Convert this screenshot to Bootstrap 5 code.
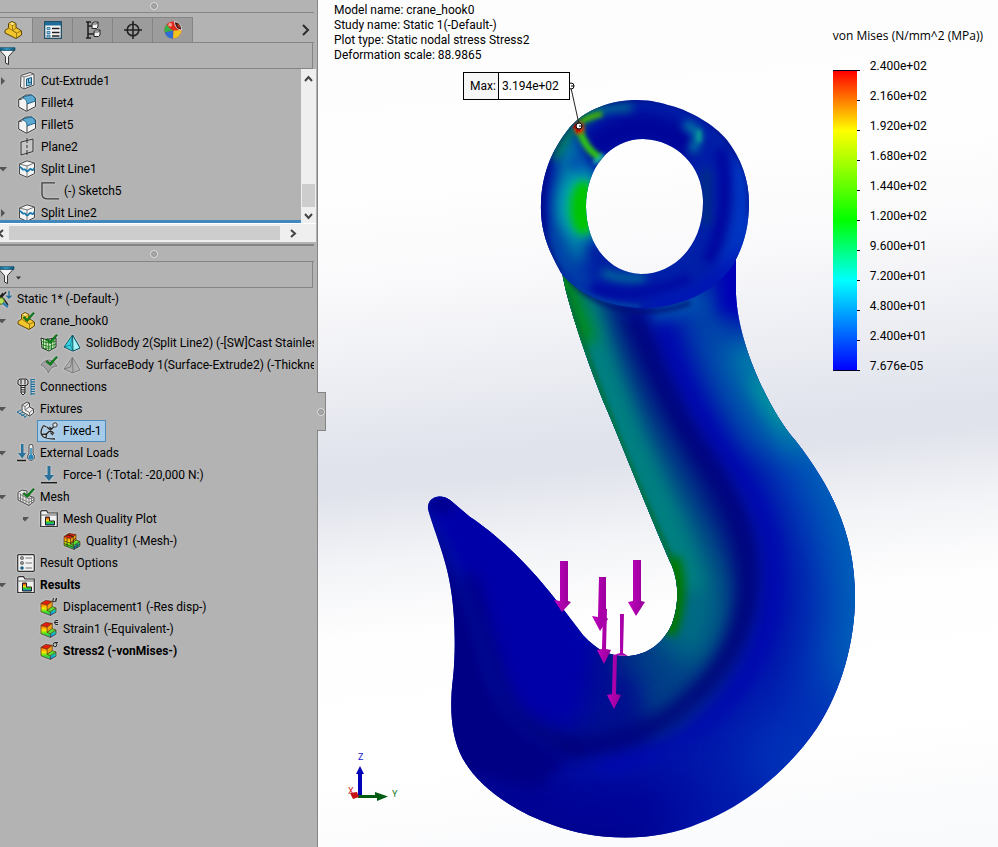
<!DOCTYPE html>
<html lang="en">
<head>
<meta charset="utf-8">
<meta name="viewport" content="width=device-width, initial-scale=1">
<title>crane_hook0 - Static 1 stress plot</title>
<link rel="stylesheet" href="https://cdn.jsdelivr.net/npm/bootstrap@5.3.0/dist/css/bootstrap.min.css">
<style>
  body { font-family: Roboto, "Open Sans", sans-serif; font-size: 12px; line-height: 15px; color: #000; }
  svg { display: block; flex: none; }
  button { color: inherit; }
  .bare { background: none; border: 0; padding: 0; }

  .side { width: 318px; background: #b3b3b3; border-right: 1px solid #858585; }
  .grip { height: 13px; border-bottom: 1px solid #858585; margin-right: 3px; }
  .grip-low { height: 18px; border-top: 2px solid #858585; margin-top: 2px; }
  .grip i, .flyout i { width: 8px; height: 8px; border: 1px solid #dedede; border-radius: 50%; background: #a8a8a8; box-shadow: inset 0 0 0 1px #909090; }
  .grip i { margin-left: -6px; }

  .tabstrip { height: 30px; padding-top: 4px; border-bottom: 1px solid #858585; margin-right: 3px; }
  .tabstrip .tab { width: 40px; background: #9c9c9c; border: 1px solid #858585; border-width: 1px 1px 0 0; padding: 0; }
  .tabstrip .tab.current { width: 33px; padding-left: 4px; background: #b3b3b3; }
  .find { height: 26px; border: 1px solid #858585; border-width: 0 1px 1px 0; margin-right: 4px; }
  .find input { background: none; border: 0; outline: 0; min-width: 0; height: 22px; font-size: 12px; }

  .tree { list-style: none; margin: 0; padding: 0; min-width: 0; white-space: nowrap; overflow: hidden; }
  .tree li { height: 22px; display: flex; align-items: center; }
  .tree .twist { width: 17px; height: 22px; flex: none; display: flex; align-items: center; }
  .tree .ic { width: 18px; height: 18px; margin-right: 5px; filter: drop-shadow(0 0 1px #dcdcdc); overflow: visible; }
  .tree .l0 { margin-left: -6px; }
  .tree .l2 { padding-left: 23px; }
  .tree .l3 { padding-left: 46px; }
  .tree .picked { display: flex; align-items: center; height: 22px; margin-left: -3px; padding: 0 3px 0 2px; background: #a6cbe8; border: 1px solid #4c8cba; }
  .history { height: 154px; }
  .history .tree { padding: 1px 0 0 1px; height: 154px; border-bottom: 3px solid #4189bd; }
  .history .twist svg { margin-left: -2px; }
  .results { margin-right: 3px; }

  .vbar { width: 15px; background: #efefef; margin-right: 1px; height: 156px; }
  .vbar button { height: 18px; }
  .vbar div { height: 23px; background: #cdcdcd; margin: 0 1px; }
  .hbar { height: 19px; background: #efefef; margin-right: 1px; padding: 2px 0; border-top: 1px solid #fff; }
  .hbar div { width: 271px; background: #cdcdcd; }
  .hbar .left { width: 9px; }
  .hbar .right { width: 26px; }

  .flyout { left: 100%; top: 392px; width: 9px; height: 39px; background: #b3b3b3; border: 1px solid #858585; border-left: 0; z-index: 2; }

  .stage { min-width: 0; background: linear-gradient(174deg, #fdfdfe 0%, #fefefe 22%, #f9f9fb 32%, #eeeff4 41%, #e0e3ec 51%, #e1e3ec 54%, #f3f4f7 62%, #fefefe 70%, #fff 85%, #f8f9fb 100%); }
  .scene { left: 0; top: 0; width: 680px; height: 847px; }
  .facts { padding: 3px 0 0 16px; }
  .legend { padding: 28px 15px 0 0; }
  .legend h2 { font: 12px/15px "Open Sans", sans-serif; margin: 0; }
  .legend ol { list-style: none; margin: 8px 0 0 10px; padding: 0; }
  .legend li { height: 30px; line-height: 30px; }
  .ramp { width: 24px; height: 301px; margin-top: 27px; border: 1px solid #002; border-width: 1px 0; background: linear-gradient(#f00 0%, #ff8000 10%, #ff0 20%, #80ff00 35%, #0f0 50%, #00ff80 60%, #0ff 70%, #0080ff 85%, #00f 100%); }
  .ticks { width: 3px; height: 301px; margin-top: 27px; }
  .ticks b { height: 1px; background: #002; }
  .callout { left: 145px; top: 72px; width: 107px; height: 28px; border: 1px solid #000; background: #fff; }
  .callout dt { width: 35px; border-right: 1px solid #000; background: #f6f6f6; font-weight: 400; padding-left: 6px; line-height: 26px; }
  .callout dd { margin: 0; padding-left: 3px; line-height: 26px; }
</style>
<script src="https://cdn.jsdelivr.net/npm/bootstrap@5.3.0/dist/js/bootstrap.bundle.min.js"></script>
</head>
<body class="m-0">

<svg width="0" height="0" class="position-absolute" aria-hidden="true">
  <defs>
    <linearGradient id="rain" x1="0" y1="0" x2="0" y2="1">
      <stop offset="0" stop-color="#e02010"/><stop offset=".25" stop-color="#f08010"/><stop offset=".42" stop-color="#f0e010"/><stop offset=".65" stop-color="#30c820"/><stop offset=".85" stop-color="#10b0a0"/><stop offset="1" stop-color="#1050d0"/>
    </linearGradient>
    <linearGradient id="face" x1="0" y1="0" x2="0" y2="1"><stop offset="0" stop-color="#ff5010"/><stop offset=".4" stop-color="#ffe800"/><stop offset=".7" stop-color="#40e020"/><stop offset="1" stop-color="#10b8c8"/></linearGradient>
    <linearGradient id="cold" x1="0" y1="0" x2="0" y2="1"><stop offset="0" stop-color="#30d830"/><stop offset=".5" stop-color="#10c0d0"/><stop offset="1" stop-color="#1058e8"/></linearGradient>
    <linearGradient id="fun" x1="0" x2="1"><stop offset="0" stop-color="#0e5578"/><stop offset=".5" stop-color="#39a0cc"/><stop offset="1" stop-color="#0e5578"/></linearGradient>
    <symbol id="i-part" viewBox="0 0 18 18"><path d="M1 9.500 4.500 7V2.500L8 .5l4 2v4l2.500 1.500 3 2v4L12 17.500 1 12z" fill="#f3c52c" stroke="#55430a"/><path d="m4.500 2.500 4 2v5l4 2.500v5M8.500 4.500 12 2.500M8.500 9.500 12 7M12.500 12l5-2M1 9.500l3.500-2.500 8 5" fill="none" stroke="#8a6c0c" stroke-width=".8"/><path d="m5 3 3-1.800L11 3 8.500 4z" fill="#ffe88a"/></symbol>
    <symbol id="i-cut" viewBox="0 0 18 18"><path d="m3 3.500 9-3 4 1.500v11l-10 4-3.500-2z" fill="#f4f4f4" stroke="#444"/><path d="M6 5v12M6 5l10-3M6 5 3 3.500" fill="none" stroke="#777"/><path d="m8.500 7 5-1.500v7l-5 1.500z" fill="#8cc6e2" stroke="#155a82"/><path d="M10.500 6.500V11l3-1" fill="none" stroke="#155a82"/></symbol>
    <symbol id="i-fillet" viewBox="0 0 18 18"><path d="M.7 5.500 8 1h5.500l4 3v8.500L8.500 17.300.7 13z" fill="#f4f4f4" stroke="#3a3a3a"/><path d="M6.500 2.500 13 1c2.500.5 4.500 2.500 4.500 6L9 10C9 7 8 5 4.500 4z" fill="#5ba9d0" stroke="#155a82" stroke-width=".9"/><path d="M9 10v7M.7 5.500l3.500-.5" stroke="#3a3a3a" fill="none"/></symbol>
    <symbol id="i-plane" viewBox="0 0 18 18"><path d="m3 4 12-3v12.500L3 17z" fill="#c6c6c6" stroke="#333"/><path d="M9 0v18" stroke="#333" stroke-dasharray="5 2 3 2"/></symbol>
    <symbol id="i-split" viewBox="0 0 18 18"><path d="M1.500 4 9 .8l7.500 2.200v10.500L9 17.300 1.500 14z" fill="#f4f4f4" stroke="#444"/><path d="m1.500 4 7.500 2 7.500-3M9 6v11" fill="none" stroke="#666" stroke-width=".9"/><path d="M1.500 7C3 6 4 10.500 6 9.500s2 3 4 1.500 2-3 3.500-1.500 2-.5 3-1.500" fill="none" stroke="#1f78aa" stroke-width="1.800"/></symbol>
    <symbol id="i-sketch" viewBox="0 0 18 18"><path d="M14 .8H1v11q0 5 5 5h12" fill="none" stroke="#3c3c3c" stroke-width="1.300"/></symbol>
    <symbol id="i-study" viewBox="0 0 18 18"><path d="m2 2 7 7M9 3l-6 8M12 2l-6 7M9 8l5 7" stroke="#222" stroke-width="1.500" fill="none"/><circle cx="7" cy="11" r="3.300" fill="#b9e05a" stroke="#4a6a18"/><path d="m9 13 5 4" stroke="#2b7fb0" stroke-width="2.400"/><path d="M15 1v7m-2.500-2.500L15 8l2.500-2.500" stroke="#1f6c98" stroke-width="1.400" fill="none"/></symbol>
    <symbol id="tick" viewBox="0 0 18 18"><path d="m7 4.500 3 2.500 6-6.500 1.500.8L10.500 9.500 6 6z" fill="#0a8a1a" stroke="#044d0c" stroke-width=".6"/></symbol>
    <symbol id="i-partok" viewBox="0 0 18 18"><use href="#i-part"/><use href="#tick"/></symbol>
    <symbol id="i-solid" viewBox="0 0 18 18"><path d="m1 4 5 1.500L16 4v9l-7 4-7-3z" fill="#d7f0c8" stroke="#222"/><path d="M3.500 5v9.500M6 5.500V16M8.700 5v12M11.500 5v11M14 5v9M1.300 7.500 9 9l7-2M1.500 10.500 9 12.500l7-2.500M4 14.500l5-.5 5 .5" fill="none" stroke="#1f7a24" stroke-width=".9"/><use href="#tick"/></symbol>
    <symbol id="i-tet" viewBox="0 0 18 18"><path d="M9.500 1 1 13l8.500 4L17 14z" fill="#38d4e4" stroke="#105a66"/><path d="M9.500 1 10 17 17 14z" fill="#a6f2f6" stroke="#105a66"/><path d="M9.500 1 7.500 11 1 13m6.500-2 2.500 6" fill="none" stroke="#105a66" stroke-width=".6"/></symbol>
    <symbol id="i-surf" viewBox="0 0 18 18"><path d="M1 9c3-5 8-6 12-4l4 5c-4 .5-7 2.500-8.500 7C7 13.500 4 10 1 9z" fill="#a2a2a2" stroke="#767676"/><use href="#tick"/></symbol>
    <symbol id="i-tetg" viewBox="0 0 18 18"><path d="M9.500 1 1 13l8.500 4L17 14z" fill="#b0b0b0" stroke="#7c7c7c"/><path d="M9.500 1 10 17M9.500 1 7.500 11 1 13" fill="none" stroke="#7c7c7c"/></symbol>
    <symbol id="i-conn" viewBox="0 0 18 18"><path d="M1 2.500 3 1h6l2 1.500V6L9 7.500H3L1 6z" fill="#d8d8d8" stroke="#222"/><path d="M4 7.500h4V15l-2 2-2-2z" fill="#eee" stroke="#222"/><path d="M4 9.500h4m-4 2.300h4M4 14h4M4 1.500v5M8 1.500v5" stroke="#222"/><path d="M14 .8v16.400" stroke="#1c6f9c"/><path d="M14 1.500h4m-4 2.400h4m-4 2.400h4m-4 2.400h4m-4 2.400h4m-4 2.400h4m-4 2.400h4" stroke="#1c6f9c" stroke-width="1.200"/></symbol>
    <symbol id="i-fixt" viewBox="0 0 18 18"><path d="m5 5 5-3 2.500 1v4l4 2v4l-4 3L5 11.500z" fill="#eee" stroke="#444"/><path d="m5 5 3 1.500V10l4.500 2.500V16M8 6.500l4-3.500m.5 9.500 4-3.500M8 10l4-3" fill="none" stroke="#666" stroke-width=".9"/><path d="m0 12 4-2M2 14l4-2M4 16l4-2M7 17.500l3-2M0 12l9 5" stroke="#246f9a" fill="none"/></symbol>
    <symbol id="i-fixed" viewBox="0 0 18 18"><path d="M3.500 3.500C.5 8 .5 11 2 13.500s7 3.500 13 3.500M1.500 12.500l5-.5-.5 4.500" fill="none" stroke="#2a2a2a" stroke-width="1.300"/><path d="M6 12.500 13.500 5M7 5l7 6.500M3.500 3.500l3 1.500M9.500 5 12 7.500m-1.500 3L13 13" stroke="#2a2a2a" stroke-width="1.300" fill="none"/><circle cx="15" cy="3" r="2.200" fill="#dce9f3" stroke="#2a2a2a"/></symbol>
    <symbol id="i-force" viewBox="0 0 18 18"><path d="M7.500 0h3v9H14l-5 6-5-6h3.500z" fill="#2a7299"/><path d="M1 16.700h16" stroke="#1c1c1c" stroke-width="1.500"/></symbol>
    <symbol id="i-loads" viewBox="0 0 18 18"><path d="M4 0h2.500v9H9l-3.800 5.500L1 9h3z" fill="#2a7299"/><path d="M0 16.500h9" stroke="#1c1c1c" stroke-width="1.500"/><path d="M12 2.200a2 2 0 0 1 4 0V10a3.500 3.500 0 1 1-4 0z" fill="#e6eef2" stroke="#444"/><circle cx="14" cy="13" r="2.600" fill="#2a86b8"/><path d="M14 4v9" stroke="#2a86b8" stroke-width="1.500"/></symbol>
    <symbol id="i-mesh" viewBox="0 0 18 18"><path d="M1 7V4.500L5 2l5 1v4l7 2.500v4L12 17.500 1 12z" fill="#e8e8e8" stroke="#444"/><path d="M3.500 5.500v7.500M6 5v9.500M9 5v10.500M12 9v8M14.500 9v7M1 9.500l11 5 5-3M2.500 6 12 11l5-1.500" fill="none" stroke="#6c6c6c" stroke-width=".8"/><use href="#tick"/></symbol>
    <symbol id="i-folder" viewBox="0 0 18 18"><path d="M.7 16.500V1.500L2 .7h4.500L8 3h9.300v13.500z" fill="#f2f2f2" stroke="#333" stroke-width="1.200"/><path d="M.7 5h16.600" stroke="#666"/><path d="M5.500 7h4v4h5v4h-9z" fill="url(#rain)" stroke="#222"/></symbol>
    <symbol id="i-cube" viewBox="0 0 18 18"><path d="M1 4.500 6 1.500l7 1-5.500 4z" fill="#e81c0c"/><path d="m1 4.500 6.500 2v5.500l3.500 1.500V17.500L1 13.500z" fill="url(#face)"/><path d="M7.500 6.500 13 2.500V8l-5.500 4z" fill="#f0a010"/><path d="M7.500 12 13 8l4 1.500-6 4z" fill="#58e030"/><path d="m11 13.500 6-4v4.500l-6 3.500z" fill="url(#cold)"/><path d="M1 4.500 6 1.500l7 1V8l4 1.500V14l-6 3.500-10-4zM1 4.500l6.500 2V12l3.500 1.500v4M7.500 6.500l5.500-4M7.500 12 13 8m-2 5.500 6-4" fill="none" stroke="#4a2408" stroke-width=".7"/></symbol>
    <symbol id="i-cubemesh" viewBox="0 0 18 18"><use href="#i-cube"/><path d="M4 5.500v9M10.300 4.500v9M1 9l6.500 2L13 6M3.500 3l7 1.500M14 11.500V16M5 2l5 3M1 11.500l10 4 6-3.500" stroke="#302008" stroke-width=".7" fill="none"/></symbol>
    <symbol id="i-opts" viewBox="0 0 18 18"><rect x=".7" y=".7" width="16.600" height="16.600" rx="1" fill="#f2f2f2" stroke="#333" stroke-width="1.200"/><circle cx="5" cy="4" r="1.600" fill="#999" stroke="#555" stroke-width=".7"/><circle cx="5" cy="9" r="1.600" fill="#999" stroke="#555" stroke-width=".7"/><circle cx="5" cy="14" r="1.800" fill="#1d5f8a"/><path d="M8.500 4H15M8.500 9H15m-6.500 5H15" stroke="#777" stroke-width="1.200"/></symbol>
    <symbol id="i-funnel" viewBox="0 0 18 18"><path d="m.5 3 6 6.500V16l3 1.500V9.500l6-6.500z" fill="#f4f4f4" stroke="#333"/><path d="M0 .7h16v2.600H0z" fill="url(#fun)" stroke="#0e4a68" stroke-width=".7"/></symbol>
    <symbol id="t-right" viewBox="0 0 8 8"><path d="M2 0v8l4-4z" fill="#555"/></symbol>
    <symbol id="t-down" viewBox="0 0 8 8"><path d="M0 2h8L4 6.500z" fill="#555"/></symbol>
  </defs>
</svg>

<div class="d-flex vh-100 overflow-hidden">
  <aside class="side position-relative flex-shrink-0 d-flex flex-column">
    <div class="grip d-flex justify-content-center align-items-center"><i></i></div>
    <div class="tabstrip d-flex">
      <button class="tab current d-flex align-items-center" type="button" aria-label="Feature tree"><svg width="18" height="18"><use href="#i-part"/></svg></button>
      <button class="tab d-flex align-items-center justify-content-center" type="button" aria-label="Properties"><svg width="18" height="18" viewBox="0 0 18 18"><rect x=".7" y=".7" width="16.600" height="16.600" fill="#f4f4f4" stroke="#15445e" stroke-width="1.200"/><path d="M1 1h16v3.500H1z" fill="#1f6c98"/><path d="M3 6.500h3v2H3zm0 4h3v2H3zm0 3.500h3v2H3z" fill="#9fd0ea" stroke="#1f6c98" stroke-width=".8"/><path d="M8 7.500h7.500m-7.500 4h7.500M8 15h7.500" stroke="#222" stroke-width="1.300"/></svg></button>
      <button class="tab d-flex align-items-center justify-content-center" type="button" aria-label="Configurations"><svg width="18" height="18" viewBox="0 0 18 18"><path d="M2 1h5M2 17h5M4 1v16M4 5h5m-5 8h7" fill="none" stroke="#222" stroke-width="1.600"/><path d="M8 2.500 10 1h4v5l-1.500 1.500H8zM10 10.500 11.500 9H16v5l-1.500 1.500H10z" fill="#f0f0f0" stroke="#222"/><path d="M8 3h4.500L14 1M10 11h4.500L16 9" fill="none" stroke="#222" stroke-width=".8"/></svg></button>
      <button class="tab d-flex align-items-center justify-content-center" type="button" aria-label="Dimensions"><svg width="18" height="18" viewBox="0 0 18 18"><circle cx="9" cy="9" r="5.800" fill="none" stroke="#222" stroke-width="1.600"/><path d="M9 0v18M0 9h18" stroke="#222" stroke-width="1.600"/></svg></button>
      <button class="tab d-flex align-items-center justify-content-center" type="button" aria-label="Display"><svg width="18" height="18" viewBox="0 0 18 18"><circle cx="9" cy="9" r="8.500" fill="#e02a1c"/><path d="M2.800 3.200Q5 8 9.500 9.500L.8 11.500A8.500 8.500 0 0 1 2.800 3.200z" fill="#35b04a"/><path d="M.8 11.500 9.500 9.500 9 17.500A8.500 8.500 0 0 1 .8 11.500z" fill="#2b6fd6"/><path d="M9.500 9.500 17.500 9A8.500 8.500 0 0 1 9 17.500z" fill="#f0c41e"/><path d="M5 2q3-1 3 2T4 5z" fill="#f49a90"/><path d="M10.500.7c4 0 7.500 4 7 8.300-4 0-7-4-7-8.300z" fill="#3a1212" stroke="#e8e8e8" stroke-width=".9"/><path d="m13.500 3.500 2.500 3" stroke="#c84020" stroke-width="1.500"/></svg></button>
      <button class="bare ms-auto pe-1" type="button" aria-label="More tabs"><svg width="8" height="12" viewBox="0 0 8 12"><path d="m1 1 5 5-5 5" fill="none" stroke="#2c2c2c" stroke-width="2"/></svg></button>
    </div>
    <div class="find d-flex align-items-center">
      <label for="find-feature" class="visually-hidden">Filter features</label>
      <svg width="17" height="18" aria-hidden="true"><use href="#i-funnel" x="-1" width="18" height="18"/></svg>
      <input id="find-feature" type="text" class="flex-grow-1">
    </div>

    <div class="history d-flex">
      <ul class="tree flex-grow-1">
        <li><button class="twist bare" type="button" aria-label="Expand"><svg width="8" height="8"><use href="#t-right"/></svg></button><svg class="ic"><use href="#i-cut"/></svg>Cut-Extrude1</li>
        <li><span class="twist"></span><svg class="ic"><use href="#i-fillet"/></svg>Fillet4</li>
        <li><span class="twist"></span><svg class="ic"><use href="#i-fillet"/></svg>Fillet5</li>
        <li><span class="twist"></span><svg class="ic"><use href="#i-plane"/></svg>Plane2</li>
        <li><button class="twist bare" type="button" aria-label="Collapse"><svg width="8" height="8"><use href="#t-down"/></svg></button><svg class="ic"><use href="#i-split"/></svg>Split Line1</li>
        <li class="l2"><span class="twist"></span><svg class="ic"><use href="#i-sketch"/></svg>(-) Sketch5</li>
        <li><button class="twist bare" type="button" aria-label="Expand"><svg width="8" height="8"><use href="#t-right"/></svg></button><svg class="ic"><use href="#i-split"/></svg>Split Line2</li>
      </ul>
      <div class="vbar flex-shrink-0 d-flex flex-column">
        <button class="bare d-flex justify-content-center align-items-center" type="button" aria-label="Scroll up"><svg width="9" height="7" viewBox="0 0 9 7"><path d="m1 6 3.500-4L8 6" fill="none" stroke="#444" stroke-width="2"/></svg></button>
        <div class="mt-auto"></div>
        <button class="bare d-flex justify-content-center align-items-center" type="button" aria-label="Scroll down"><svg width="9" height="7" viewBox="0 0 9 7"><path d="m1 1 3.500 4L8 1" fill="none" stroke="#444" stroke-width="2"/></svg></button>
      </div>
    </div>
    <div class="hbar d-flex">
      <button class="left bare d-flex align-items-center" type="button" aria-label="Scroll left"><svg width="4" height="9" viewBox="3 0 4 9"><path d="M6 1 2 4.500 6 8" fill="none" stroke="#444" stroke-width="2"/></svg></button>
      <div></div>
      <button class="right bare d-flex align-items-center justify-content-center" type="button" aria-label="Scroll right"><svg width="7" height="9" viewBox="0 0 7 9"><path d="m1 1 4 3.500L1 8" fill="none" stroke="#444" stroke-width="2"/></svg></button>
    </div>
    <div class="grip grip-low d-flex justify-content-center align-items-center"><i></i></div>
    <div class="find d-flex align-items-center">
      <label for="find-study" class="visually-hidden">Filter study</label>
      <svg width="16" height="18" aria-hidden="true"><use href="#i-funnel" x="-2" width="18" height="18"/></svg>
      <button class="bare" type="button" aria-label="Filter options"><svg width="5" height="12" viewBox="0 0 5 12"><path d="M0 7.500h5L2.500 10.500z" fill="#333"/></svg></button>
      <input id="find-study" type="text" class="flex-grow-1">
    </div>

    <ul class="tree results">
      <li class="l0"><svg class="ic"><use href="#i-study"/></svg>Static 1* (-Default-)</li>
      <li><button class="twist bare" type="button" aria-label="Collapse"><svg width="6" height="8" viewBox="2 0 6 8"><path d="M0 2h8L4 6.500z" fill="#555"/></svg></button><svg class="ic"><use href="#i-partok"/></svg>crane_hook0</li>
      <li class="l2"><span class="twist"></span><svg class="ic"><use href="#i-solid"/></svg><svg class="ic"><use href="#i-tet"/></svg>SolidBody 2(Split Line2) (-[SW]Cast Stainless Steel-)</li>
      <li class="l2"><span class="twist"></span><svg class="ic"><use href="#i-surf"/></svg><svg class="ic"><use href="#i-tetg"/></svg>SurfaceBody 1(Surface-Extrude2) (-Thickness-)</li>
      <li><span class="twist"></span><svg class="ic"><use href="#i-conn"/></svg>Connections</li>
      <li><button class="twist bare" type="button" aria-label="Collapse"><svg width="6" height="8" viewBox="2 0 6 8"><path d="M0 2h8L4 6.500z" fill="#555"/></svg></button><svg class="ic"><use href="#i-fixt"/></svg>Fixtures</li>
      <li class="l2"><span class="twist"></span><span class="picked"><svg class="ic"><use href="#i-fixed"/></svg>Fixed-1</span></li>
      <li><button class="twist bare" type="button" aria-label="Collapse"><svg width="6" height="8" viewBox="2 0 6 8"><path d="M0 2h8L4 6.500z" fill="#555"/></svg></button><svg class="ic"><use href="#i-loads"/></svg>External Loads</li>
      <li class="l2"><span class="twist"></span><svg class="ic"><use href="#i-force"/></svg>Force-1 (:Total: -20,000 N:)</li>
      <li><button class="twist bare" type="button" aria-label="Collapse"><svg width="6" height="8" viewBox="2 0 6 8"><path d="M0 2h8L4 6.500z" fill="#555"/></svg></button><svg class="ic"><use href="#i-mesh"/></svg>Mesh</li>
      <li class="l2"><button class="twist bare" type="button" aria-label="Collapse"><svg width="6" height="8"><use href="#t-down" x="-2" width="8" height="8"/></svg></button><svg class="ic"><use href="#i-folder"/></svg>Mesh Quality Plot</li>
      <li class="l3"><span class="twist"></span><svg class="ic"><use href="#i-cubemesh"/></svg>Quality1 (-Mesh-)</li>
      <li><span class="twist"></span><svg class="ic"><use href="#i-opts"/></svg>Result Options</li>
      <li class="fw-bold"><button class="twist bare" type="button" aria-label="Collapse"><svg width="6" height="8" viewBox="2 0 6 8"><path d="M0 2h8L4 6.500z" fill="#555"/></svg></button><svg class="ic"><use href="#i-folder"/></svg>Results</li>
      <li class="l2"><span class="twist"></span><svg class="ic" viewBox="0 0 18 18"><use href="#i-cube" y="1" width="17" height="17"/><path d="M13.500 0l-.8 3.500q1.500 1.500 3-1l.8-2.500-.8 4" fill="none" stroke="#222"/></svg>Displacement1 (-Res disp-)</li>
      <li class="l2"><span class="twist"></span><svg class="ic" viewBox="0 0 18 18"><use href="#i-cube" y="1" width="17" height="17"/><path d="M18 .5h-2.500q-2 2 0 4H18M14.500 2.500H18" fill="none" stroke="#222"/></svg>Strain1 (-Equivalent-)</li>
      <li class="l2 fw-bold"><span class="twist"></span><svg class="ic" viewBox="0 0 18 18"><use href="#i-cube" y="1" width="17" height="17"/><path d="M18 .5h-3" stroke="#222"/><ellipse cx="15" cy="2.700" rx="1.800" ry="2.100" fill="none" stroke="#222"/></svg>Stress2 (-vonMises-)</li>
    </ul>

    <button class="flyout bare position-absolute d-flex align-items-center" type="button" aria-label="Collapse panel"><i></i></button>
  </aside>

  <main class="stage position-relative flex-grow-1">
    <svg class="scene position-absolute" viewBox="318 0 680 847" role="img" aria-label="Stress plot of a crane hook">
      <defs>
        <clipPath id="cBody"><path d="M562 272 C566 300 590 370 607 410 S658 536 672 566 C679 584 679 604 672 624 C662 646 644 656 626 656 C608 656 597 650 583 635 C566 613 556 599 537 577 C515 552 490 530 470 517 L450 500 C440 493 427 497 428 509 C433 528 447 560 451 590 C455 615 456 650 453 678 C449 710 452 735 460 753 C472 780 505 808 553 825 C595 841 655 843 700 823 C747 805 790 768 817 728 C842 690 855 640 855 597 C855 540 836 492 795 440 C770 412 738 345 736 294 V255 C710 262 680 290 640 290 C610 290 580 270 562 262Z"/></clipPath>
        <path id="pRing" d="M637 100 C652 100 661 103 672 106 C690 111 714 124 727 140 C741 158 749 180 749 203 C749 226 744 245 735 261 L735 262 C715 293 680 308 640 308 C600 306 575 290 561 273 C547 248 540 228 541 203 C542 176 550 152 570 127 C585 110 610 100 637 100Z M643 139 C677 140 702 166 703 200 C704 243 676 274 641 274 C608 273 586 243 586 207 C586 168 610 139 643 139Z"/>
        <clipPath id="cRing"><use href="#pRing" clip-rule="evenodd"/></clipPath>
        <filter id="b2" filterUnits="userSpaceOnUse" x="400" y="60" width="500" height="820" color-interpolation-filters="sRGB"><feGaussianBlur stdDeviation="2"/></filter>
        <filter id="b3" filterUnits="userSpaceOnUse" x="400" y="60" width="500" height="820" color-interpolation-filters="sRGB"><feGaussianBlur stdDeviation="4"/></filter>
        <filter id="b6" filterUnits="userSpaceOnUse" x="400" y="60" width="500" height="820" color-interpolation-filters="sRGB"><feGaussianBlur stdDeviation="8"/></filter>
        <filter id="b12" filterUnits="userSpaceOnUse" x="360" y="20" width="580" height="900" color-interpolation-filters="sRGB"><feGaussianBlur stdDeviation="14"/></filter>
        <filter id="b20" filterUnits="userSpaceOnUse" x="360" y="20" width="580" height="900" color-interpolation-filters="sRGB"><feGaussianBlur stdDeviation="26"/></filter>
        <linearGradient id="purple" x1="0" x2="1"><stop offset="0" stop-color="#c000c0"/><stop offset="1" stop-color="#960096"/></linearGradient>
      </defs>

      <!-- hook body -->
      <g clip-path="url(#cBody)" fill="none">
        <rect x="420" y="250" width="450" height="600" fill="#0018ac"/>
        <path d="M765 330 C770 400 850 440 870 590 C870 660 840 720 760 790" stroke="#0034b8" stroke-width="90" filter="url(#b20)"/>
        <path d="M790 390 C830 450 862 500 870 590 C872 640 866 660 856 690" stroke="#0066b8" stroke-width="76" filter="url(#b20)"/>
        <path d="M400 780 Q500 860 660 870" stroke="#00007c" stroke-width="80" filter="url(#b20)"/>
        <path d="M480 770 Q570 830 680 800" stroke="#000094" stroke-width="60" filter="url(#b20)"/>
        <path d="M700 290 Q715 380 770 440" stroke="#0048aa" stroke-width="40" filter="url(#b12)"/>
        <path d="M742 340 Q756 390 802 445" stroke="#0084a8" stroke-width="36" filter="url(#b12)"/>
        <path d="M756 380 Q768 404 786 424" stroke="#00a098" stroke-width="9" filter="url(#b6)"/>
        <path d="M742 240 V315" stroke="#0000b8" stroke-width="46" filter="url(#b6)"/>
        <path d="M650 316 Q680 310 700 296" stroke="#0058b0" stroke-width="18" filter="url(#b6)"/>
        <!-- outer flank beside the ridge -->
        <path d="M662 325 C684 390 706 430 741 475 C781 530 784 600 756 660 C724 715 670 750 600 765" stroke="#0008b0" stroke-width="18" filter="url(#b6)"/>
        <!-- inner flank -->
        <path d="M550 262 L628 305 C650 345 668 395 700 445 C735 495 753 530 753 580 C752 640 715 690 665 722 C625 745 570 750 545 740 C520 720 510 690 600 640 L680 600Z" fill="#001284" filter="url(#b6)"/>
        <path d="M556 270 C574 350 596 390 616 430 S684 560 690 590 C692 640 670 680 630 700" stroke="#004088" stroke-width="88" filter="url(#b12)"/>
        <path d="M556 270 C572 330 592 385 612 430 S686 552 692 590 C694 620 686 634 672 650" stroke="#006c84" stroke-width="56" filter="url(#b12)"/>
        <path d="M580 300 Q604 390 646 480 T688 590" stroke="#008080" stroke-width="30" filter="url(#b6)"/>
        <path d="M556 264 Q568 315 584 345" stroke="#008c18" stroke-width="30" filter="url(#b6)"/>
        <path d="M566 290 Q606 420 672 560" stroke="#00703c" stroke-width="5" filter="url(#b2)"/>
        <path d="M672 558 Q684 595 668 634" stroke="#007800" stroke-width="16" filter="url(#b3)"/>
        <path d="M560 690 Q600 655 640 676 L640 740 L550 740Z" fill="#001090" filter="url(#b12)"/>
        <!-- ridge -->
        <path d="M634 314 C654 362 670 407 700 450 C733 498 749 530 749 580 C748 640 711 688 663 720 C625 743 590 750 560 747" stroke="#00007a" stroke-width="15" filter="url(#b6)"/>
        <!-- tip -->
        <path d="M436 485 C510 520 550 570 584 620 L600 650 L580 725 C540 740 520 720 506 690 C493 640 476 580 426 505Z" fill="#0000aa" filter="url(#b12)"/>
        <path d="M436 485 C510 520 540 560 570 610 L560 690 C540 710 520 710 510 680 C493 640 476 580 436 505Z" fill="#0000a8" filter="url(#b6)"/>
        <path d="M412 500 C446 550 470 600 484 660 C496 710 520 735 570 756 L540 790 L440 770Z" fill="#000084" filter="url(#b6)"/>
        <path d="M468 575 C488 630 496 685 518 716 Q541 740 580 750" stroke="#000074" stroke-width="10" filter="url(#b6)"/>
        <ellipse cx="441" cy="505" rx="14" ry="8" fill="#000090" filter="url(#b3)"/>
        <path d="M562 268 C575 289 600 309 640 312 C660 312 675 309 690 303" stroke="#001070" stroke-width="5" filter="url(#b2)" opacity=".7"/>
      </g>

      <!-- eye -->
      <g clip-path="url(#cRing)" fill="none">
        <rect x="530" y="90" width="230" height="230" fill="#0020a8"/>
        <path d="M738 160 Q752 210 728 270" stroke="#0038c4" stroke-width="24" filter="url(#b6)"/>
        <path d="M720 150 Q734 205 708 262" stroke="#0006a0" stroke-width="12" filter="url(#b3)"/>
        <path d="M706 170 V225" stroke="#00307c" stroke-width="8" filter="url(#b3)"/>
        <path d="M590 150 Q640 105 695 150" stroke="#000498" stroke-width="30" filter="url(#b6)"/>
        <path d="M546 255 Q533 200 556 145" stroke="#000ea0" stroke-width="18" filter="url(#b3)"/>
        <path d="M564 136 Q574 165 568 190 Q562 230 580 262" stroke="#0078a8" stroke-width="24" filter="url(#b6)"/>
        <path d="M572 160 L590 180" stroke="#0050b0" stroke-width="14" filter="url(#b3)"/>
        <ellipse cx="582" cy="206" rx="22" ry="35" fill="#00b0b0" filter="url(#b6)"/>
        <ellipse cx="583" cy="208" rx="13" ry="27" fill="#00c400" filter="url(#b3)"/>
        <path d="M550 230 Q560 265 590 287" stroke="#0048a8" stroke-width="14" filter="url(#b6)"/>
        <path d="M592 250 Q602 262 612 268" stroke="#0020a0" stroke-width="10" filter="url(#b3)"/>
        <path d="M602 272 Q618 280 645 278" stroke="#006c98" stroke-width="8" filter="url(#b3)"/>
        <path d="M592 286 Q630 305 690 278" stroke="#0008a0" stroke-width="10" filter="url(#b3)"/>
        <path d="M575 286 C590 300 610 305 640 307" stroke="#0040a4" stroke-width="5" filter="url(#b2)"/>
        <path d="M650 308 Q705 304 745 255" stroke="#0014b8" stroke-width="18" filter="url(#b6)"/>
        <path d="M552 158 Q566 124 600 106" stroke="#007c60" stroke-width="14" filter="url(#b3)"/>
        <path d="M585 114 Q602 107 632 107" stroke="#006c90" stroke-width="8" filter="url(#b3)"/>
        <path d="M579 128 Q584 148 600 158" stroke="#30c810" stroke-width="7" filter="url(#b2)"/>
        <path d="M580 122 Q590 116 602 114" stroke="#48b000" stroke-width="5" filter="url(#b2)"/>
        <path d="M594 163 L604 155" stroke="#20d0b0" stroke-width="4" filter="url(#b2)"/>
        <ellipse cx="579" cy="128" rx="5" ry="6" fill="#f02000" filter="url(#b2)"/>
        <path d="m575 124 6 0-1 8-2-1-1 3-1-5-3-1z" fill="#b01000"/>
        <path d="M684 124 Q700 130 698 138 L692 152" stroke="#0088a8" stroke-width="8" filter="url(#b3)"/>
        <path d="M699 130 V142" stroke="#10a898" stroke-width="4" filter="url(#b2)"/>
        <path d="M749 215 C750 180 745 160 727 140 C700 105 660 100 637 100 C600 100 580 112 570 127 C535 170 535 230 561 273" stroke="#000870" stroke-width="3" opacity=".6" filter="url(#b2)"/>
      </g>

      <!-- force arrows -->
      <g fill="url(#purple)">
        <path d="M560 561h8v40l3 1-9 10-8-12 6 1z"/>
        <path d="M599 577h7v40l2 2-8 12-8-15 6 1z"/>
        <path d="M633 560h8v41l4 1-9 14-8-14 5-1z"/>
        <path d="M603 609h4l-1 40 5 1-7 14-7-14 5-1z"/>
        <path d="M620 614h4l-1 39 5 3-14-1 6-2z"/>
        <path d="M613 655h4l-1 39 5 1-7 14-7-14 5-1z"/>
      </g>

      <!-- callout leader -->
      <path d="M571 88 579 124" stroke="#222" fill="none"/>
      <g fill="#fff" stroke="#000"><circle cx="571" cy="86" r="3"/><circle cx="579" cy="126" r="3"/></g>
      <path d="M571 86h3M579 126h3" stroke="#000"/>

      <!-- axis triad -->
      <path d="M358 797v-23h-2l4-8 4 8h-2v23z" fill="#0000b8"/>
      <path d="M358 795h17v-3l13 4.500-11 4.500v-3h-19z" fill="#005c10"/>
      <path d="M350 793l7-1 2 5-6 2z" fill="#c41010"/>
      <g font-size="9"><text x="358" y="760" fill="#2020c8">Z</text><text x="392" y="797" fill="#107a20">Y</text><text x="348" y="794" fill="#d02020">X</text></g>
    </svg>

    <div class="position-relative d-flex justify-content-between">
      <div class="facts">
        <div>Model name: crane_hook0</div>
        <div>Study name: Static 1(-Default-)</div>
        <div>Plot type: Static nodal stress Stress2</div>
        <div>Deformation scale: 88.9865</div>
      </div>
      <div class="legend">
        <h2>von Mises (N/mm^2 (MPa))</h2>
        <div class="d-flex">
          <div class="ramp"></div>
          <div class="ticks d-flex flex-column justify-content-between"><b></b><b></b><b></b><b></b><b></b><b></b><b></b><b></b><b></b><b></b><b></b></div>
          <ol>
            <li>2.400e+02</li><li>2.160e+02</li><li>1.920e+02</li><li>1.680e+02</li><li>1.440e+02</li><li>1.200e+02</li><li>9.600e+01</li><li>7.200e+01</li><li>4.800e+01</li><li>2.400e+01</li><li>7.676e-05</li>
          </ol>
        </div>
      </div>
    </div>
    <dl class="callout position-absolute d-flex m-0"><dt>Max:</dt><dd>3.194e+02</dd></dl>
  </main>
</div>
</body>
</html>
